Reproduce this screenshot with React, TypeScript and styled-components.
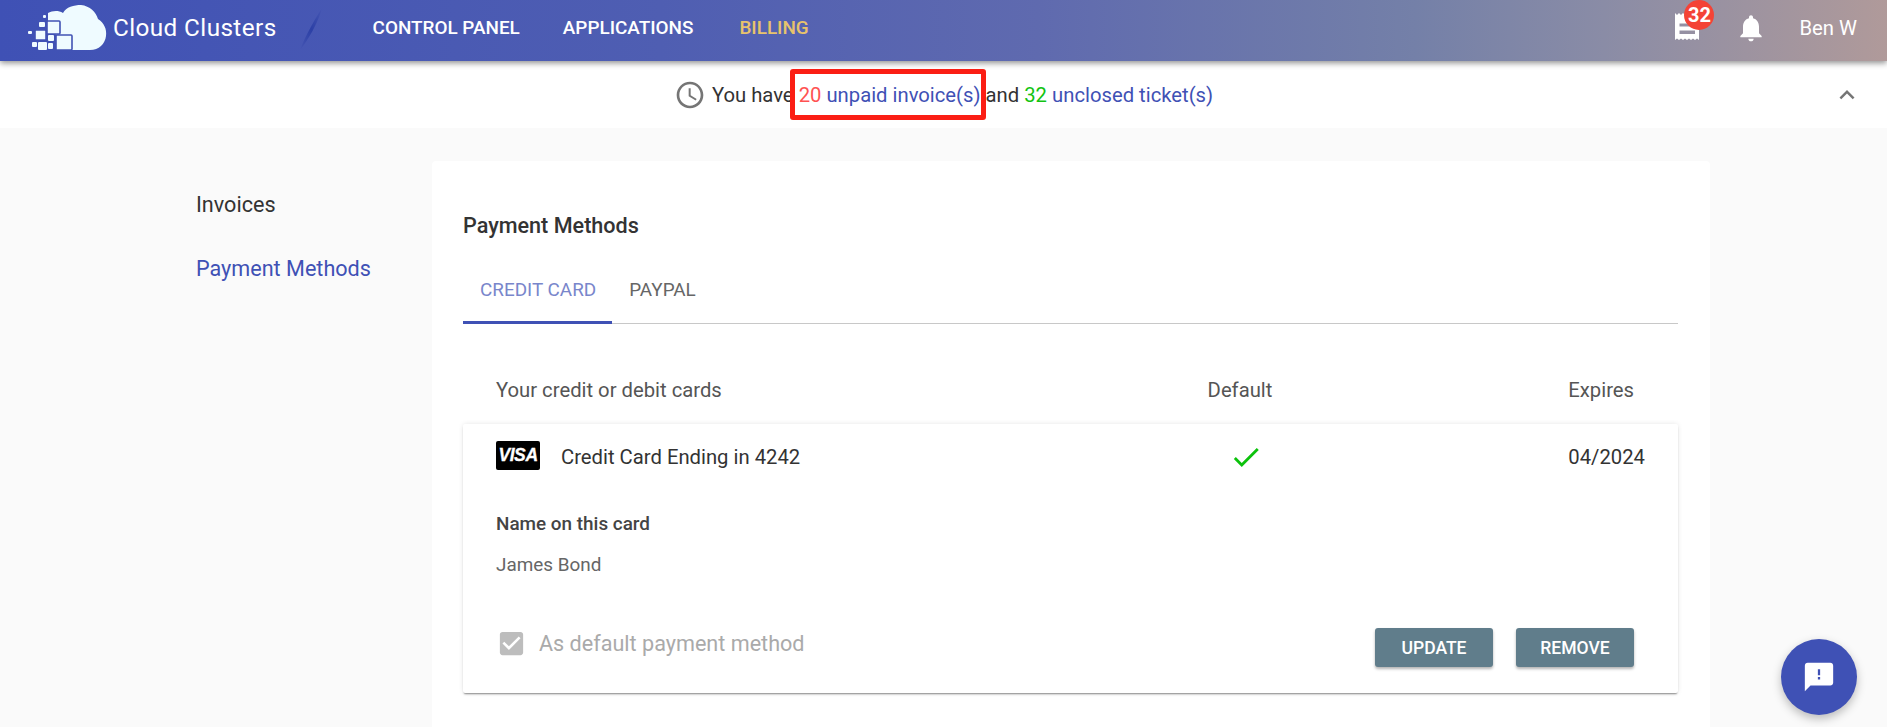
import styled, { createGlobalStyle } from 'styled-components'

const GlobalStyle = createGlobalStyle`
    html, body {
        margin: 0;
        padding: 0;
        height: 100%;
        overflow: hidden;
        background: #fafafa;
        font-family: Roboto, "Liberation Sans", sans-serif;
        color: #333;
    }
    * { box-sizing: border-box; }
`

const Page = styled.div`
    height: 727px;
    overflow: hidden;
    position: relative;
`

const Header = styled.header`
    height: 61px;
    display: flex;
    align-items: center;
    padding: 0 0 4px 27px;
    background: linear-gradient(90deg, #3f51b5 0%, #4f5eb2 35%, #5f6aaf 55%, #7480a8 75%, #8a8ca6 85%, #b09a9a 100%);
    box-shadow: 0 2px 6px rgba(0, 0, 0, 0.45);
    position: relative;
    z-index: 2;
`

const Brand = styled.div`
    display: flex;
    align-items: center;
    gap: 6px;
    color: #fff;
    font-size: 24.3px;
    letter-spacing: 0.4px;
`

const BrandName = styled.span`
    margin-bottom: 2px;
`

const Slash = styled.svg`
    width: 24px;
    height: 44px;
    margin-left: 22px;
`

const Nav = styled.nav`
    display: flex;
    gap: 43px;
    margin: 0 0 3px 50px;
`

const NavLink = styled.a<{ $active?: boolean }>`
    font-size: 18.9px;
    font-weight: 500;
    text-transform: uppercase;
    margin-left: ${props => props.$active ? '3px' : '0'};
    color: ${props => props.$active ? '#e8c36c' : '#fff'};
`

const HeaderRight = styled.div`
    margin: 0 0 2px auto;
    display: flex;
    align-items: center;
    padding-right: 30px;
    color: #fff;
`

const ReceiptBox = styled.div`
    position: relative;
    width: 25px;
    height: 28px;
    margin: 0 35px 1px 0;
`

const Badge = styled.span`
    position: absolute;
    left: 9px;
    top: -13px;
    width: 30px;
    height: 30px;
    border-radius: 50%;
    background: #f44336;
    color: #fff;
    font-size: 20px;
    font-weight: 700;
    display: flex;
    align-items: center;
    justify-content: center;
`

const UserName = styled.span`
    font-size: 20.25px;
    margin-left: 32px;
`

const Notice = styled.div`
    height: 67px;
    background: #fff;
    display: grid;
    grid-template-columns: 1fr auto 1fr;
    align-items: center;
    position: relative;
`

const NoticeText = styled.div`
    grid-column: 2;
    display: flex;
    align-items: center;
    gap: 6px;
    font-size: 20.25px;
    white-space: pre;
`

const Count = styled.span<{ $color: string }>`
    color: ${props => props.$color};
`

const Link = styled.span`
    color: #3f51b5;
`

const Chevron = styled.div`
    grid-column: 3;
    justify-self: end;
    display: flex;
    padding-right: 25px;
`

const RedBox = styled.div`
    position: absolute;
    left: 790px;
    top: 8px;
    width: 196px;
    height: 51px;
    border: 5px solid #fb1e14;
    border-radius: 3px;
`

const Main = styled.main`
    display: flex;
    padding: 33px 177px 0 196px;
`

const Sidebar = styled.aside`
    width: 236px;
    flex-shrink: 0;
    display: flex;
    flex-direction: column;
    gap: 40px;
    padding-top: 32px;
`

const SideItem = styled.a<{ $active?: boolean }>`
    font-size: 21.6px;
    line-height: 24px;
    color: ${props => props.$active ? '#3f51b5' : '#333'};
`

const Card = styled.section`
    flex: 1;
    background: #fff;
    border-radius: 4px;
    height: 600px;
    padding: 51px 32px 0 31px;
`

const Title = styled.h2`
    margin: 0;
    font-size: 21.6px;
    font-weight: 500;
    line-height: 28px;
    color: #333;
`

const Tabs = styled.div`
    display: flex;
    margin-top: 19px;
    border-bottom: 1px solid #c8c8c8;
    height: 65px;
`

const Tab = styled.div<{ $active?: boolean }>`
    font-size: 18.9px;
    padding: 0 16px 0 17px;
    line-height: 62px;
    height: 65px;
    color: ${props => props.$active ? '#7986cb' : '#666'};
    border-bottom: ${props => props.$active ? '3px solid #3f51b5' : 'none'};
`

const ListHead = styled.div`
    display: grid;
    grid-template-columns: 1fr 160px 314px;
    padding: 0 44px 0 33px;
    margin-top: 54px;
    font-size: 20.25px;
    line-height: 24px;
    color: #555;
`

const HeadCenter = styled.div`
    text-align: center;
`

const HeadRight = styled.div`
    text-align: right;
`

const PayCard = styled.div`
    margin-top: 22px;
    height: 269px;
    background: #fff;
    border-radius: 2px;
    box-shadow: 0 2px 2px -1px rgba(0, 0, 0, 0.45), 0 0 5px rgba(0, 0, 0, 0.1);
    padding: 16px 33px 0 33px;
    display: flex;
    flex-direction: column;
`

const CardRow = styled.div`
    display: grid;
    grid-template-columns: 1fr 160px 319px;
    align-items: center;
    font-size: 20.25px;
    height: 34px;
    color: #333;
`

const CardName = styled.div`
    display: flex;
    align-items: center;
    gap: 21px;
`

const Visa = styled.span`
    width: 44px;
    height: 29px;
    margin-top: -3px;
    border-radius: 2px;
    background: #000;
    color: #fff;
    font-family: "Liberation Sans", sans-serif;
    font-size: 17.5px;
    font-weight: 700;
    font-style: italic;
    display: flex;
    align-items: center;
    justify-content: center;
    letter-spacing: -0.4px;
    -webkit-text-stroke: 0.3px #fff;
`

const CheckCell = styled.div`
    display: flex;
    justify-content: center;
`

const ExpiresCell = styled.div`
    text-align: right;
`

const FieldLabel = styled.div`
    margin-top: 38px;
    font-size: 18.9px;
    font-weight: 500;
    line-height: 24px;
    color: #444;
`

const FieldValue = styled.div`
    margin-top: 17px;
    font-size: 18.9px;
    line-height: 24px;
    color: #666;
`

const CardFooter = styled.div`
    display: flex;
    align-items: center;
    margin-top: 51px;
    padding-right: 11px;
`

const DefaultLabel = styled.label`
    display: flex;
    align-items: center;
    gap: 12px;
    margin: -8px 0 0 0;
    font-size: 21.6px;
    color: #aaa;
`

const Buttons = styled.div`
    margin-left: auto;
    display: flex;
    gap: 23px;
`

const Button = styled.button`
    width: 118px;
    height: 39px;
    border: none;
    border-radius: 3px;
    background: #607d8b;
    color: #fff;
    font-family: inherit;
    font-size: 17.55px;
    font-weight: 500;
    text-transform: uppercase;
    box-shadow: 0 2px 3px rgba(0, 0, 0, 0.3);
`

const Fab = styled.button`
    position: absolute;
    left: 1781px;
    top: 639px;
    width: 76px;
    height: 76px;
    border: none;
    border-radius: 50%;
    background: #3f51b5;
    box-shadow: 0 4px 10px rgba(0, 0, 0, 0.25);
    display: flex;
    align-items: center;
    justify-content: center;
`

const logoSquares = [
    [20, 16, 13, 13],
    [8, 25, 11, 10],
    [29, 30, 16, 15],
    [21, 30, 6, 6],
    [11, 37, 9, 8],
    [5, 37, 5, 5],
    [21, 38, 5, 6],
    [12, 17, 6, 5],
    [1, 26, 4, 3],
    [16, 10, 3, 3],
]

const Logo = () => (
    <svg width="80" height="47" viewBox="0 0 80 47" fill="#effbff">
        <path d="M21 8 C25 6 31 5 36 8 C39 2 47 0 54 0 C63 1 69 7 71 14 C77 18 80 24 79 31 C78 39 72 45 63 45 L29 45 L29 30 L21 16 Z" />
        {logoSquares.map(([x, y, w, h]) => (
            <rect
                key={`${x}-${y}`}
                x={x}
                y={y}
                width={w}
                height={h}
                rx="1"
                stroke={w > 10 ? '#4253b4' : 'none'}
                strokeWidth="1.6"
            />
        ))}
    </svg>
)

const Receipt = () => (
    <svg width="25" height="28" viewBox="0 0 25 28" fill="#fff">
        <path fillRule="evenodd" d="M0 0 L2 2 L4 0 L6 2 L8 0 L10 2 L12 0 L24 5 L24 27 L22 25.5 L20 27 L18 25.5 L16 27 L14 25.5 L12 27 L10 25.5 L8 27 L6 25.5 L4 27 L2 25.5 L0 27 Z M4.5 10.5 L4.5 13.5 L20 13.5 L20 10.5 Z M4.5 17.5 L4.5 21 L20 21 L20 17.5 Z" />
    </svg>
)

const Bell = () => (
    <svg width="32" height="32" viewBox="0 0 24 24" fill="#fff">
        <path d="M12 22c1.1 0 2-.9 2-2h-4c0 1.1.89 2 2 2zm6-6v-5c0-3.07-1.64-5.64-4.5-6.32V4c0-.83-.67-1.5-1.5-1.5s-1.5.67-1.5 1.5v.68C7.63 5.36 6 7.92 6 11v5l-2 2v1h16v-1l-2-2z" />
    </svg>
)

const Clock = () => (
    <svg width="32" height="32" viewBox="0 0 24 24" fill="#757575">
        <path d="M11.99 2C6.47 2 2 6.48 2 12s4.47 10 9.99 10C17.52 22 22 17.52 22 12S17.52 2 11.99 2zM12 20c-4.42 0-8-3.58-8-8s3.58-8 8-8 8 3.58 8 8-3.58 8-8 8z" />
        <path d="M12.5 7H11v6l5.25 3.15.75-1.23-4.5-2.67z" />
    </svg>
)

export default function App() {
    return (
        <Page>
            <GlobalStyle />
            <Header>
                <Brand>
                    <Logo />
                    <BrandName>Cloud Clusters</BrandName>
                </Brand>
                <Slash viewBox="0 0 24 44">
                    <defs>
                        <linearGradient id="slashFade" x1="1" y1="0" x2="0" y2="1">
                            <stop offset="0" stopColor="#4656b3" />
                            <stop offset="0.5" stopColor="#2c40a6" />
                            <stop offset="1" stopColor="#4656b3" />
                        </linearGradient>
                    </defs>
                    <path d="M23 1 C18 9 7 27 1 43 C9 33 19 16 23 1 Z" fill="url(#slashFade)" />
                </Slash>
                <Nav>
                    <NavLink>Control Panel</NavLink>
                    <NavLink>Applications</NavLink>
                    <NavLink $active>Billing</NavLink>
                </Nav>
                <HeaderRight>
                    <ReceiptBox>
                        <Receipt />
                        <Badge>32</Badge>
                    </ReceiptBox>
                    <Bell />
                    <UserName>Ben W</UserName>
                </HeaderRight>
            </Header>

            <Notice>
                <NoticeText>
                    <Clock />
                    <span>
                        You have <Count $color="#ff5252">20</Count> <Link>unpaid invoice(s)</Link> and{' '}
                        <Count $color="#12c312">32</Count> <Link>unclosed ticket(s)</Link>
                    </span>
                </NoticeText>
                <Chevron>
                    <svg width="30" height="30" viewBox="0 0 24 24" fill="#757575">
                        <path d="M12 8l-6 6 1.41 1.41L12 10.83l4.59 4.58L18 14z" />
                    </svg>
                </Chevron>
                <RedBox />
            </Notice>

            <Main>
                <Sidebar>
                    <SideItem>Invoices</SideItem>
                    <SideItem $active>Payment Methods</SideItem>
                </Sidebar>
                <Card>
                    <Title>Payment Methods</Title>
                    <Tabs>
                        <Tab $active>CREDIT CARD</Tab>
                        <Tab>PAYPAL</Tab>
                    </Tabs>
                    <ListHead>
                        <div>Your credit or debit cards</div>
                        <HeadCenter>Default</HeadCenter>
                        <HeadRight>Expires</HeadRight>
                    </ListHead>
                    <PayCard>
                        <CardRow>
                            <CardName>
                                <Visa>VISA</Visa>
                                Credit Card Ending in 4242
                            </CardName>
                            <CheckCell>
                                <svg width="34" height="34" viewBox="0 0 24 24" fill="#0cc20c">
                                    <path d="M9 16.17L4.83 12l-1.42 1.41L9 19 21 7l-1.41-1.41z" />
                                </svg>
                            </CheckCell>
                            <ExpiresCell>04/2024</ExpiresCell>
                        </CardRow>
                        <FieldLabel>Name on this card</FieldLabel>
                        <FieldValue>James Bond</FieldValue>
                        <CardFooter>
                            <DefaultLabel>
                                <svg width="31" height="31" viewBox="0 0 24 24" fill="#bdbdbd">
                                    <path d="M19 3H5c-1.11 0-2 .9-2 2v14c0 1.1.89 2 2 2h14c1.11 0 2-.9 2-2V5c0-1.1-.89-2-2-2zm-9 14l-5-5 1.41-1.41L10 14.17l7.59-7.59L19 8l-9 9z" />
                                </svg>
                                As default payment method
                            </DefaultLabel>
                            <Buttons>
                                <Button>Update</Button>
                                <Button>Remove</Button>
                            </Buttons>
                        </CardFooter>
                    </PayCard>
                </Card>
            </Main>

            <Fab>
                <svg width="34" height="34" viewBox="0 0 24 24" fill="#fff">
                    <path fillRule="evenodd" d="M20 2H4c-1.1 0-1.99.9-1.99 2L2 22l4-4h14c1.1 0 2-.9 2-2V4c0-1.1-.9-2-2-2z M11.2 6.5v4.2h1.6V6.5z M11.2 12v1.7h1.6V12z" />
                </svg>
            </Fab>
        </Page>
    )
}
